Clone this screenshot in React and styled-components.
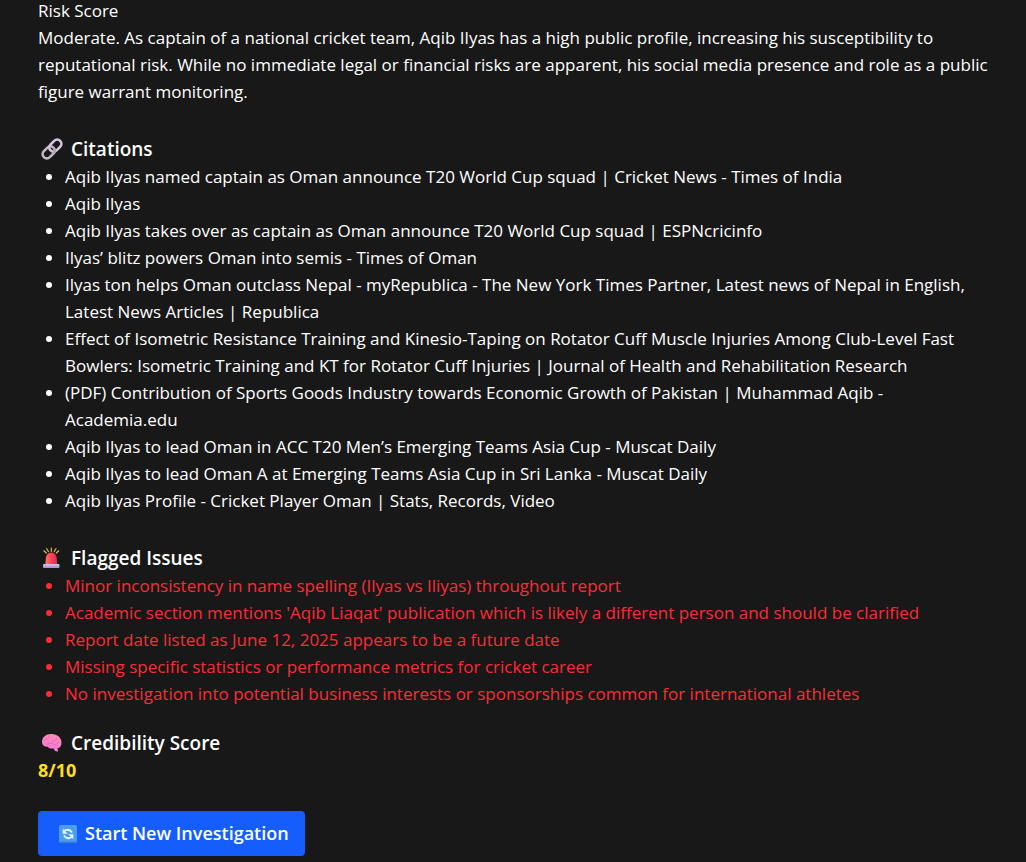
import React from "react";
import styled, { createGlobalStyle } from "styled-components";

const GlobalStyle = createGlobalStyle`
  *, *::before, *::after { box-sizing: border-box; }
  body {
    margin: 0;
    overflow-x: hidden;
    background: #181818;
    color: #ffffff;
    font-family: "Open Sans", "Noto Sans", sans-serif;
    font-size: 17px;
    line-height: 27px;
  }
`;

const Report = styled.main`
  margin-top: -3px;
  padding: 0 38px 6px;
`;

const Section = styled.section`
  margin-bottom: ${({ $gap }) => $gap}px;
`;

const Text = styled.p`
  margin: 0;
`;

const Heading = styled.h2`
  display: flex;
  align-items: center;
  gap: 8px;
  margin: 0;
  padding-left: 3px;
  font-size: 19px;
  font-weight: 600;
  line-height: 28px;
`;

const List = styled.ul`
  margin: 0;
  padding-left: 27px;
  color: ${({ $color }) => $color || "inherit"};
`;

const Score = styled.p`
  margin: 0;
  color: #ffdf20;
  font-size: 18px;
  font-weight: 700;
`;

const Button = styled.button`
  display: flex;
  align-items: center;
  gap: 8px;
  height: 45px;
  padding: 0 16px 0 21px;
  border: 0;
  border-radius: 4px;
  background: #155dfc;
  color: #ffffff;
  font: inherit;
  font-size: 18px;
  font-weight: 600;
  cursor: pointer;
`;

const Icon = styled.svg`
  flex: none;
  width: ${({ $size }) => $size}px;
  height: ${({ $size }) => $size}px;
`;

const LinkIcon = () => (
  <Icon $size={22} viewBox="0 0 22 22" aria-hidden="true" fill="none">
    <g transform="rotate(-45 11 11)" strokeWidth="2.6">
      <rect x="-0.5" y="6.8" width="13.5" height="8.4" rx="4.2" stroke="#c4b4ca" />
      <rect x="9" y="6.8" width="13.5" height="8.4" rx="4.2" stroke="#d3c6d8" />
      <path d="M8.800 15.200a4.200 4.200 0 0 0 4.200-4.200" stroke="#b3a2bb" />
    </g>
  </Icon>
);

const SirenIcon = () => (
  <Icon $size={22} viewBox="0 0 22 22" aria-hidden="true">
    <defs>
      <linearGradient id="siren-dome" x1="0" x2="1">
        <stop offset="0" stopColor="#ff7474" />
        <stop offset="0.5" stopColor="#fa4257" />
        <stop offset="1" stopColor="#dc2c50" />
      </linearGradient>
      <linearGradient id="siren-base" x1="0" x2="0" y1="0" y2="1">
        <stop offset="0" stopColor="#d9c2ee" />
        <stop offset="1" stopColor="#a88bd2" />
      </linearGradient>
    </defs>
    <path d="M10.300 1v3.500M5.700 1.700l1.800 3M14.900 1.700l-1.800 3M2.900 3.800l2.400 2.200M17.700 3.800l-2.400 2.200" stroke="#e9b84c" strokeWidth="1.2" strokeLinecap="round" />
    <path d="M4.300 18l.6-7a5.400 5.400 0 0 1 10.800 0l.6 7z" fill="url(#siren-dome)" />
    <rect x="2" y="17" width="16.500" height="4" rx="1" fill="url(#siren-base)" />
  </Icon>
);

const BrainIcon = () => (
  <Icon $size={22} viewBox="0 0 22 22" aria-hidden="true">
    <defs>
      <linearGradient id="brain-fill" x1="0.5" x2="0.4" y1="0" y2="1">
        <stop offset="0" stopColor="#f78db0" />
        <stop offset="1" stopColor="#fb74e0" />
      </linearGradient>
    </defs>
    <path d="M1 10C1 5 5 2 10 2c6-.3 10.500 3.500 10.500 8.500 0 3.500-1.500 5.500-4 5.700l.6 3.600-3-.8-1.800-2.800c-2.500.8-4.600 0-5.600-1.500C3 14.800 1 13 1 10z" fill="url(#brain-fill)" />
    <path d="M3 8.500c2-2.500 4-1 5-4m3 6c0-2.500 4.500-1.500 5-4.500m-10 6c3 0 4-2 6 0s4.500 0 6-2" fill="none" stroke="#e45fb3" strokeWidth="0.8" />
  </Icon>
);

const RefreshIcon = () => (
  <Icon $size={18} viewBox="0 0 18 18" aria-hidden="true">
    <rect width="18" height="18" rx="1.5" fill="#4b9eee" />
    <path d="M0 16.500h18V18H0z" fill="#3681d6" />
    <path d="M5 6.500C7 4 11 4 13 7.500M13 11.500C11 14 7 14 5 10.500" fill="none" stroke="#eaf4ff" strokeWidth="1.8" />
    <path d="M3.700 3.700v5h5zM14.300 14.300v-5h-5z" fill="#eaf4ff" />
  </Icon>
);

const citations = [
  "Aqib Ilyas named captain as Oman announce T20 World Cup squad | Cricket News - Times of India",
  "Aqib Ilyas",
  "Aqib Ilyas takes over as captain as Oman announce T20 World Cup squad | ESPNcricinfo",
  "Ilyas’ blitz powers Oman into semis - Times of Oman",
  "Ilyas ton helps Oman outclass Nepal - myRepublica - The New York Times Partner, Latest news of Nepal in English, Latest News Articles | Republica",
  "Effect of Isometric Resistance Training and Kinesio-Taping on Rotator Cuff Muscle Injuries Among Club-Level Fast Bowlers: Isometric Training and KT for Rotator Cuff Injuries | Journal of Health and Rehabilitation Research",
  "(PDF) Contribution of Sports Goods Industry towards Economic Growth of Pakistan | Muhammad Aqib - Academia.edu",
  "Aqib Ilyas to lead Oman in ACC T20 Men’s Emerging Teams Asia Cup - Muscat Daily",
  "Aqib Ilyas to lead Oman A at Emerging Teams Asia Cup in Sri Lanka - Muscat Daily",
  "Aqib Ilyas Profile - Cricket Player Oman | Stats, Records, Video",
];

const issues = [
  "Minor inconsistency in name spelling (Ilyas vs Iliyas) throughout report",
  "Academic section mentions 'Aqib Liaqat' publication which is likely a different person and should be clarified",
  "Report date listed as June 12, 2025 appears to be a future date",
  "Missing specific statistics or performance metrics for cricket career",
  "No investigation into potential business interests or sponsorships common for international athletes",
];

export default function App() {
  return (
    <>
      <GlobalStyle />
      <Report>
        <Section $gap={30}>
          <Text>Risk Score</Text>
          <Text>
            Moderate. As captain of a national cricket team, Aqib Ilyas has a high public profile,
            increasing his susceptibility to reputational risk. While no immediate legal or financial
            risks are apparent, his social media presence and role as a public figure warrant monitoring.
          </Text>
        </Section>
        <Section $gap={30}>
          <Heading><LinkIcon />Citations</Heading>
          <List>{citations.map((c) => <li key={c}>{c}</li>)}</List>
        </Section>
        <Section $gap={22}>
          <Heading><SirenIcon />Flagged Issues</Heading>
          <List $color="#fb2c36">{issues.map((c) => <li key={c}>{c}</li>)}</List>
        </Section>
        <Section $gap={27}>
          <Heading><BrainIcon />Credibility Score</Heading>
          <Score>8/10</Score>
        </Section>
        <Button type="button"><RefreshIcon />Start New Investigation</Button>
      </Report>
    </>
  );
}
